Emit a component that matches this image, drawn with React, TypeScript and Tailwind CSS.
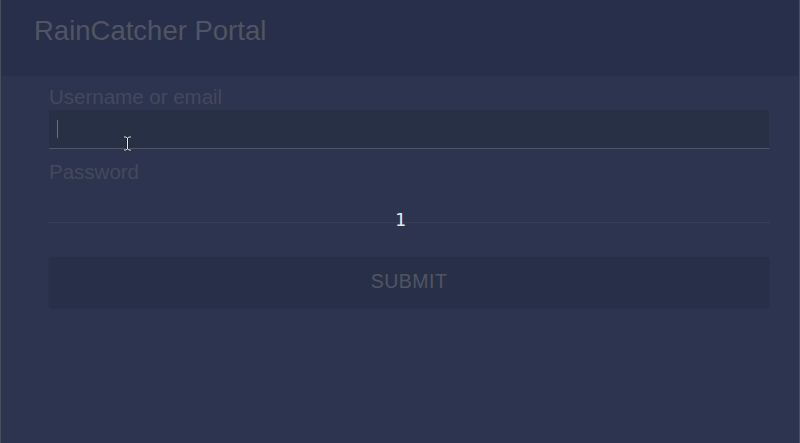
import React from "react";

const App = () => {
  return (
    <div
      className="relative h-[443px] w-[800px] overflow-hidden border-l border-r border-[#4a4f5e] bg-[#2d3450]"
      style={{ fontFamily: '"Liberation Sans", Arial, sans-serif' }}
    >
      <header className="flex h-[76px] items-center bg-[#282f4a] pl-[33px] pb-[14px]">
        <h1 className="text-[27.5px] leading-none text-[#515563]">RainCatcher Portal</h1>
      </header>

      <form className="flex flex-col pl-[48px] pr-[30px] pt-[10px]">
        <label className="text-[20.5px] leading-[22px] text-[#44495a]">Username or email</label>
        <div className="mt-[2px] flex h-[39px] items-center border-b border-[#4f566a] bg-[#283045] pl-[8px]">
          <div className="h-[18px] w-px bg-[#6a7083]" />
        </div>

        <label className="mt-[12px] text-[20.5px] leading-[22px] text-[#44495a]">Password</label>
        <div className="relative mt-[2px] h-[38px] border-b border-dotted border-[#3f4760]">
          <span
            className="absolute left-[346px] top-[26px] text-[18px] leading-none text-[#e6e8ee]"
            style={{ fontFamily: '"DejaVu Sans Mono", monospace' }}
          >
            1
          </span>
        </div>

        <button
          type="button"
          className="mt-[34px] h-[50px] w-full rounded-[2px] bg-[#283049] text-[19.5px] uppercase tracking-[0.5px] text-[#515563] shadow-[0_1px_2px_rgba(0,0,0,0.15)]"
        >
          Submit
        </button>
      </form>

      <svg className="absolute left-[122px] top-[136px]" width="9" height="15" viewBox="0 0 9 15">
        <path d="M1 1h2l1.5 1 1.5-1h2M4.5 2v11M1 14h2l1.5-1 1.5 1h2" fill="none" stroke="#1b1f2a" strokeWidth="2.4" />
        <path d="M1 1h2l1.5 1 1.5-1h2M4.5 2v11M1 14h2l1.5-1 1.5 1h2" fill="none" stroke="#e8eaf0" strokeWidth="1" />
      </svg>
    </div>
  );
};

export default App;
